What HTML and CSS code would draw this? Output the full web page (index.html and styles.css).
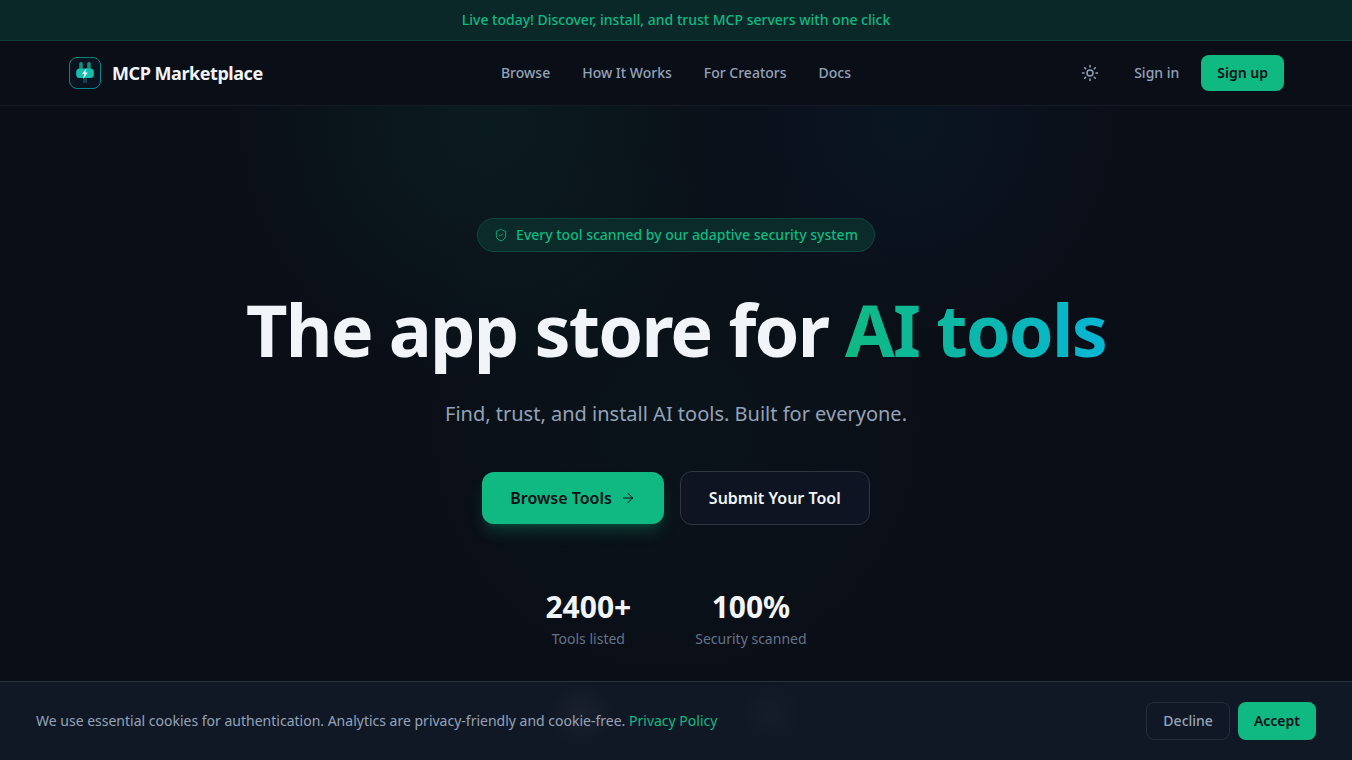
FILE: index.html
```html
<!DOCTYPE html>
<html lang="en">
<head>
    <meta charset="UTF-8">
    <meta name="viewport" content="width=device-width, initial-scale=1.0">
    <title>MCP Marketplace</title>
    <link rel="stylesheet" href="styles.css">
</head>
<body>
    <div class="announcement">
        <a href="#">Live today! Discover, install, and trust MCP servers with one click</a>
    </div>

    <header class="header">
        <div class="header-inner">
            <a class="brand" href="#">
                <svg class="brand-logo" viewBox="-1 -1 34 34" fill="none" aria-hidden="true">
                    <defs>
                        <linearGradient id="logoGradient" x1="0" y1="0" x2="32" y2="32" gradientUnits="userSpaceOnUse">
                            <stop stop-color="#10b981"/>
                            <stop offset="1" stop-color="#06b6d4"/>
                        </linearGradient>
                    </defs>
                    <rect x="0.5" y="0.5" width="31" height="31" rx="7.5" fill="#0a1420" stroke="url(#logoGradient)" stroke-opacity="0.7"/>
                    <rect x="10.2" y="5" width="3.6" height="9" rx="1.8" fill="#148f82"/>
                    <rect x="18.2" y="5" width="3.6" height="9" rx="1.8" fill="#148f82"/>
                    <rect x="7.2" y="11.5" width="17.6" height="9.5" rx="3.5" fill="#12bfae"/>
                    <rect x="14" y="21" width="4" height="5" rx="1" fill="#12404a"/>
                    <path d="M17.6 11 13 17h2.4l-1.4 5 4.8-6.4h-2.4z" fill="#f1f5f9"/>
                </svg>
                <span>MCP Marketplace</span>
            </a>
            <nav class="nav">
                <a href="#">Browse</a>
                <a href="#">How It Works</a>
                <a href="#">For Creators</a>
                <a href="#">Docs</a>
            </nav>
            <div class="actions">
                <button class="theme-toggle" type="button" aria-label="Toggle theme">
                    <svg viewBox="0 0 24 24" aria-hidden="true">
                        <circle cx="12" cy="12" r="4"/>
                        <path d="M12 2v2M12 20v2M4.93 4.93l1.41 1.41M17.66 17.66l1.41 1.41M2 12h2M20 12h2M6.34 17.66l-1.41 1.41M19.07 4.93l-1.41 1.41"/>
                    </svg>
                </button>
                <a class="sign-in" href="#">Sign in</a>
                <a class="sign-up" href="#">Sign up</a>
            </div>
        </div>
    </header>

    <main class="hero">
        <div class="badge">
            <svg viewBox="0 0 24 24" aria-hidden="true">
                <path d="M20 13c0 5-3.5 7.5-7.66 8.95a1 1 0 0 1-.67-.01C7.5 20.5 4 18 4 13V6a1 1 0 0 1 1-1c2 0 4.5-1.2 6.24-2.72a1.17 1.17 0 0 1 1.52 0C14.51 3.81 17 5 19 5a1 1 0 0 1 1 1z"/>
                <path d="m9 12 2 2 4-4"/>
            </svg>
            <span>Every tool scanned by our adaptive security system</span>
        </div>
        <h1>The app store for <span class="gradient-text">AI tools</span></h1>
        <p class="subtitle">Find, trust, and install AI tools. Built for everyone.</p>
        <div class="hero-buttons">
            <a class="btn-primary" href="#">
                Browse Tools
                <svg viewBox="0 0 24 24" aria-hidden="true">
                    <path d="M5 12h14M12 5l7 7-7 7"/>
                </svg>
            </a>
            <a class="btn-secondary" href="#">Submit Your Tool</a>
        </div>
        <div class="stats">
            <div class="stat">
                <strong>2400+</strong>
                <span>Tools listed</span>
            </div>
            <div class="stat">
                <strong>100%</strong>
                <span>Security scanned</span>
            </div>
        </div>
    </main>

    <div class="cookie-bar">
        <p>We use essential cookies for authentication. Analytics are privacy-friendly and cookie-free. <a href="#">Privacy Policy</a></p>
        <div class="cookie-buttons">
            <button class="decline" type="button">Decline</button>
            <button class="accept" type="button">Accept</button>
        </div>
    </div>
</body>
</html>
```
FILE: styles.css
```css
* {
    box-sizing: border-box;
}

body {
    margin: 0;
    min-height: 100vh;
    background-color: #0a0e17;
    color: #f1f5f9;
    font-family: "Noto Sans", sans-serif;
    font-size: 14px;
    line-height: 20px;
    overflow-x: hidden;
}

a {
    color: inherit;
    text-decoration: none;
}

button {
    font: inherit;
    cursor: pointer;
}

svg {
    fill: none;
    stroke: currentColor;
    stroke-width: 2;
    stroke-linecap: round;
    stroke-linejoin: round;
}

.announcement {
    padding: 10px 16px;
    background-color: #0b2829;
    border-bottom: 1px solid #0f3f3a;
    color: #10b981;
    font-weight: 500;
    text-align: center;
}

/* Header */
.header {
    border-bottom: 1px solid #171d28;
}

.header-inner {
    display: grid;
    grid-template-columns: 1fr auto 1fr;
    align-items: center;
    max-width: 1280px;
    height: 64px;
    margin: 0 auto;
    padding: 0 32px;
}

.brand {
    display: flex;
    align-items: center;
    gap: 10px;
    font-size: 18px;
    font-weight: 700;
    letter-spacing: -0.025em;
}

.brand-logo {
    width: 34px;
    height: 34px;
    stroke: none;
    stroke-width: 1;
}

.nav {
    display: flex;
    gap: 32px;
    color: #94a3b8;
    font-weight: 500;
}

.actions {
    display: flex;
    align-items: center;
    justify-content: flex-end;
    color: #94a3b8;
    font-weight: 500;
}

.theme-toggle {
    display: flex;
    padding: 9px;
    border: 0;
    background: none;
    color: inherit;
}

.theme-toggle svg {
    width: 18px;
    height: 18px;
}

.sign-in {
    padding: 8px 22px 8px 26px;
}

.sign-up {
    padding: 8px 16px;
    border-radius: 8px;
    background-color: #10b981;
    color: #0a0e17;
    font-weight: 600;
}

/* Hero */
.hero {
    display: flex;
    flex-direction: column;
    align-items: center;
    padding: 112px 24px;
    background:
        radial-gradient(circle at 36% 20px, rgba(16, 185, 129, 0.08), rgba(16, 185, 129, 0.06) 80px, transparent 260px),
        radial-gradient(circle at 67% 20px, rgba(6, 140, 212, 0.06), rgba(6, 140, 212, 0.04) 80px, transparent 220px),
        radial-gradient(circle at 50% 320px, rgba(16, 185, 129, 0.03), transparent 290px);
    text-align: center;
}

.badge {
    display: flex;
    align-items: center;
    gap: 8px;
    padding: 6px 16px;
    border: 1px solid #0d4a3e;
    border-radius: 999px;
    background-color: #0b2a2a;
    color: #10b981;
    font-weight: 500;
}

.badge svg {
    width: 14px;
    height: 14px;
    stroke-width: 1.5;
}

h1 {
    margin: 40px 0 0;
    font-size: 72px;
    font-weight: 700;
    letter-spacing: -0.025em;
    line-height: 74px;
}

.gradient-text {
    background: linear-gradient(to right, #10b981, #06b6d4);
    -webkit-background-clip: text;
    background-clip: text;
    color: transparent;
}

.subtitle {
    margin: 32px 0 0;
    color: #94a3b8;
    font-size: 20px;
    line-height: 32px;
}

.hero-buttons {
    display: flex;
    align-items: center;
    gap: 16px;
    margin-top: 41px;
    font-size: 16px;
    font-weight: 600;
    line-height: 24px;
}

.btn-primary,
.btn-secondary {
    display: flex;
    align-items: center;
    gap: 8px;
    padding: 14px 28px;
    border-radius: 12px;
}

.btn-primary {
    background-color: #10b981;
    box-shadow: 0 10px 15px -3px rgba(16, 185, 129, 0.25), 0 4px 6px -4px rgba(16, 185, 129, 0.25);
    color: #0a0e17;
}

.btn-primary svg {
    width: 16px;
    height: 16px;
    stroke-width: 1.5;
}

.btn-secondary {
    border: 1px solid #2f3541;
    background-color: #0f1422;
}

.stats {
    display: flex;
    gap: 64px;
    margin-top: 64px;
}

.stat {
    display: flex;
    flex-direction: column;
    gap: 4px;
}

.stat strong {
    font-size: 30px;
    font-weight: 700;
    line-height: 36px;
}

.stat span {
    color: #64748b;
}

/* Cookie notice sits over the page */
.cookie-bar {
    position: fixed;
    right: 0;
    bottom: 0;
    left: 0;
    display: flex;
    align-items: center;
    justify-content: space-between;
    gap: 16px;
    padding: 20px 36px;
    border-top: 1px solid #293140;
    background:
        radial-gradient(circle at 43% 32px, rgba(241, 245, 249, 0.04), transparent 32px),
        radial-gradient(circle at 57% 32px, rgba(241, 245, 249, 0.02), transparent 32px),
        #111825;
    color: #94a3b8;
}

.cookie-bar p {
    margin: 0;
}

.cookie-bar p a {
    color: #10b981;
}

.cookie-buttons {
    display: flex;
    gap: 8px;
}

.cookie-buttons button {
    padding: 8px 16px;
    border: 1px solid #272e3b;
    border-radius: 8px;
    background: none;
    color: #94a3b8;
    font-weight: 500;
}

.cookie-buttons .accept {
    border: 0;
    background-color: #10b981;
    color: #0a0e17;
    font-weight: 600;
}
```
